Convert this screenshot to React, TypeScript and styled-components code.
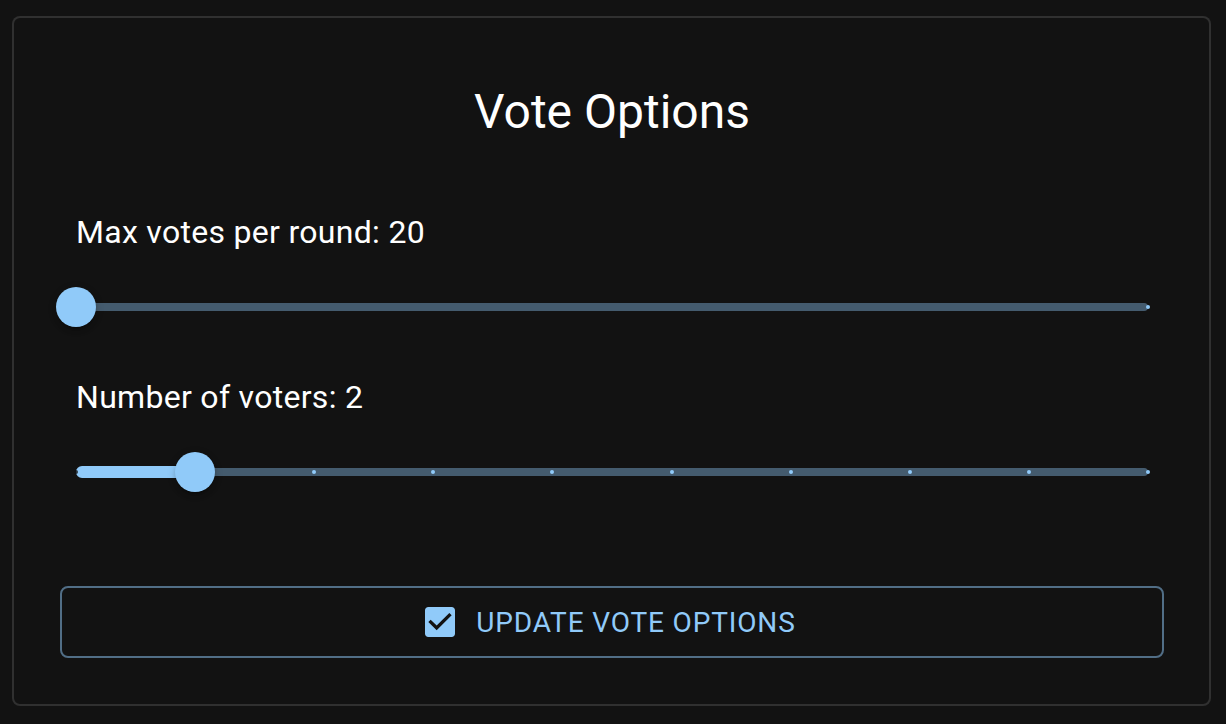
import React from "react";
import styled, { createGlobalStyle } from "styled-components";

const GlobalStyle = createGlobalStyle`
  html, body {
    margin: 0;
    padding: 0;
    background: #121212;
  }
  body {
    font-family: Roboto, "Liberation Sans", Arial, sans-serif;
    color: #fff;
  }
`;

const Page = styled.div`
  padding: 16px 15px 0 12px;
  box-sizing: border-box;
  width: 1226px;
`;

const Card = styled.section`
  box-sizing: border-box;
  width: 1199px;
  height: 690px;
  border: 2px solid rgba(255, 255, 255, 0.13);
  border-radius: 8px;
  background: #121212;
  padding: 62px 45px 45px 46px;
  display: flex;
  flex-direction: column;
`;

const Title = styled.h2`
  margin: 0;
  font-size: 48px;
  font-weight: 400;
  line-height: 64px;
  text-align: center;
  letter-spacing: 0;
`;

const Field = styled.div<{ $top: number }>`
  display: flex;
  flex-direction: column;
  gap: 21px;
  padding: 0 16px;
  margin-top: ${(p) => p.$top}px;
`;

const Label = styled.div`
  font-size: 32px;
  line-height: 48px;
  letter-spacing: 0.3px;
`;

const SliderRoot = styled.div`
  position: relative;
  height: 60px;
`;

const Rail = styled.span`
  position: absolute;
  left: 0;
  right: 0;
  top: 50%;
  height: 8px;
  transform: translateY(-50%);
  border-radius: 8px;
  background: #90caf9;
  opacity: 0.4;
`;

const Track = styled.span`
  position: absolute;
  left: 0;
  top: 50%;
  height: 12px;
  box-sizing: border-box;
  transform: translateY(-50%);
  border-radius: 8px;
  border: 2px solid #90caf9;
  background: #90caf9;
`;

const Mark = styled.span<{ $active: boolean }>`
  position: absolute;
  top: 50%;
  width: 4px;
  height: 4px;
  border-radius: 2px;
  transform: translate(-50%, -50%);
  background: ${(p) => (p.$active ? "#121212" : "#90caf9")};
  opacity: ${(p) => (p.$active ? 0.8 : 1)};
`;

const Thumb = styled.span`
  position: absolute;
  top: 50%;
  width: 40px;
  height: 40px;
  border-radius: 50%;
  background: #90caf9;
  transform: translate(-50%, -50%);
  box-shadow: 0 6px 2px -4px rgba(0, 0, 0, 0.2), 0 4px 4px 0 rgba(0, 0, 0, 0.14),
    0 2px 10px 0 rgba(0, 0, 0, 0.12);
`;

const Button = styled.button`
  margin-top: 84px;
  height: 72px;
  box-sizing: border-box;
  width: 100%;
  border: 2px solid rgba(144, 202, 249, 0.5);
  border-radius: 8px;
  background: transparent;
  color: #90caf9;
  font-family: Roboto, "Liberation Sans", Arial, sans-serif;
  font-size: 28px;
  font-weight: 400;
  letter-spacing: 0.85px;
  text-transform: uppercase;
  display: flex;
  align-items: center;
  justify-content: center;
  cursor: pointer;
`;

const IconWrap = styled.span`
  display: inline-flex;
  margin-left: -8px;
  margin-right: 16px;
  width: 40px;
  height: 40px;
`;

type SliderProps = { min: number; max: number; value: number; marks: number[] };

function Slider({ min, max, value, marks }: SliderProps) {
  const pct = (v: number) => ((v - min) / (max - min)) * 100;
  const p = pct(value);
  return (
    <SliderRoot>
      <Rail />
      <Track style={{ width: `${p}%` }} />
      {marks.map((m) => (
        <Mark key={m} $active={m <= value} style={{ left: `${pct(m)}%` }} />
      ))}
      <Thumb style={{ left: `${p}%` }} />
    </SliderRoot>
  );
}

function CheckBoxIcon() {
  return (
    <svg width="40" height="40" viewBox="0 0 24 24" fill="currentColor">
      <path d="M19 3H5c-1.11 0-2 .9-2 2v14c0 1.1.89 2 2 2h14c1.11 0 2-.9 2-2V5c0-1.1-.89-2-2-2zm-9 14l-5-5 1.41-1.41L10 14.17l7.59-7.59L19 8l-9 9z" />
    </svg>
  );
}

export default function App() {
  return (
    <>
      <GlobalStyle />
      <Page>
        <Card>
          <Title>Vote Options</Title>
          <Field $top={64}>
            <Label>Max votes per round: 20</Label>
            <Slider min={20} max={100} value={20} marks={[20, 100]} />
          </Field>
          <Field $top={36}>
            <Label>Number of voters: 2</Label>
            <Slider min={1} max={10} value={2} marks={[1, 2, 3, 4, 5, 6, 7, 8, 9, 10]} />
          </Field>
          <Button>
            <IconWrap>
              <CheckBoxIcon />
            </IconWrap>
            Update Vote Options
          </Button>
        </Card>
      </Page>
    </>
  );
}
